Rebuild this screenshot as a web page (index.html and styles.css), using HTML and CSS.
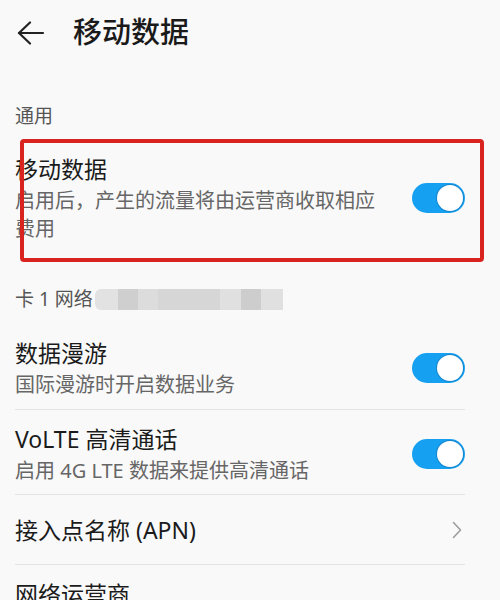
FILE: index.html
```html
<!DOCTYPE html>
<html lang="zh-CN">
<head>
  <meta charset="UTF-8" />
  <meta name="viewport" content="width=device-width, initial-scale=1.0"/>
  <title>移动数据</title>
  <link rel="stylesheet" href="styles.css">
</head>
<body>
  <div class="page">
    <div class="top-bar">
      <svg class="back" width="28" height="24" viewBox="0 0 28 24" fill="none" stroke="#222" stroke-width="2.2" stroke-linecap="round" stroke-linejoin="round">
        <path d="M26 12H2"/>
        <path d="M13 1.5L2 12l11 10.5"/>
      </svg>
      <h1 class="page-title">移动数据</h1>
    </div>

    <div class="group-label first">通用</div>
    <div class="row marked">
      <div class="row-text">
        <div class="row-title">移动数据</div>
        <div class="row-sub">启用后，产生的流量将由运营商收取相应费用</div>
      </div>
      <div class="switch"><span class="knob"></span></div>
      <div class="highlight"></div>
    </div>

    <div class="group-label sim">
      <span>卡 1 网络</span>
      <span class="blurred"></span>
    </div>
    <div class="row">
      <div class="row-text">
        <div class="row-title">数据漫游</div>
        <div class="row-sub">国际漫游时开启数据业务</div>
      </div>
      <div class="switch"><span class="knob"></span></div>
    </div>
    <div class="row line">
      <div class="row-text">
        <div class="row-title">VoLTE 高清通话</div>
        <div class="row-sub">启用 4G LTE 数据来提供高清通话</div>
      </div>
      <div class="switch"><span class="knob"></span></div>
    </div>
    <div class="row line single">
      <div class="row-text">
        <div class="row-title">接入点名称 (APN)</div>
      </div>
      <svg class="chevron" width="10" height="18" viewBox="0 0 10 18" fill="none" stroke="#9a9a9a" stroke-width="1.5" stroke-linecap="round" stroke-linejoin="round">
        <path d="M1.5 1.5L8.5 9l-7 7.5"/>
      </svg>
    </div>
    <div class="row line last">
      <div class="row-text">
        <div class="row-title">网络运营商</div>
      </div>
    </div>
  </div>
</body>
</html>
```

FILE: styles.css
```css
* {
  box-sizing: border-box;
}
body, html {
  margin: 0;
  padding: 0;
  overflow: hidden;
  height: 100%;
  background: #f9f9f9;
  font-family: "Noto Sans", "Noto Sans CJK SC", sans-serif;
  color: #1b1b1b;
}
.page {
  height: 600px;
  overflow: hidden;
  padding: 0 35px 0 15px;
}
.top-bar {
  height: 64px;
  display: flex;
  align-items: center;
}
.back {
  margin-left: 2px;
  margin-top: 1px;
}
.page-title {
  margin: 0 0 0 28px;
  font-size: 29px;
  font-weight: 500;
  line-height: 40px;
  color: #1a1a1a;
}
.group-label {
  font-size: 19px;
  line-height: 24px;
  color: #555;
}
.group-label.first {
  margin-top: 40px;
  margin-bottom: 12px;
}
.group-label.sim {
  display: flex;
  align-items: center;
  margin-top: 34px;
  margin-bottom: 13px;
}
.blurred {
  display: inline-block;
  width: 188px;
  height: 21px;
  margin-left: 2px;
  border-radius: 6px 0 0 6px;
  background: linear-gradient(to right,
    #e2e2e2 0, #e2e2e2 23px,
    #cfcfcf 23px, #cfcfcf 43px,
    #dcdcdc 43px, #dcdcdc 63px,
    #d6d6d6 63px, #d6d6d6 125px,
    #e0e0e0 125px, #e0e0e0 146px,
    #cdcdcd 146px, #cdcdcd 166px,
    #e0e0e0 166px, #e0e0e0 188px);
}
.row {
  position: relative;
  display: flex;
  align-items: center;
  padding: 13px 0 10px;
}
.row.line {
  border-top: 1px solid #e3e3e3;
  padding-bottom: 9px;
}
.row.single {
  padding: 19px 0 18px;
}
.row.last {
  padding-top: 13px;
}
.row-text {
  flex: 1;
}
.row-title {
  font-size: 23px;
  line-height: 32px;
}
.row-sub {
  margin-top: 2px;
  font-size: 20px;
  line-height: 28px;
  color: #666;
}
.switch {
  margin-left: 30px;
  width: 53px;
  height: 30px;
  border-radius: 15px;
  background: #16a0f2;
  padding: 2px;
  display: flex;
  justify-content: flex-end;
}
.knob {
  width: 26px;
  height: 26px;
  border-radius: 50%;
  background: #fff;
  box-shadow: 0 0 0 1px #1486cc;
}
.chevron {
  margin-right: 3px;
}
/* red annotation frame drawn over the first row */
.highlight {
  position: absolute;
  top: -1px;
  left: 5px;
  right: -19px;
  bottom: -9px;
  border: 4px solid #d8231f;
  border-radius: 4px;
  pointer-events: none;
}
```
